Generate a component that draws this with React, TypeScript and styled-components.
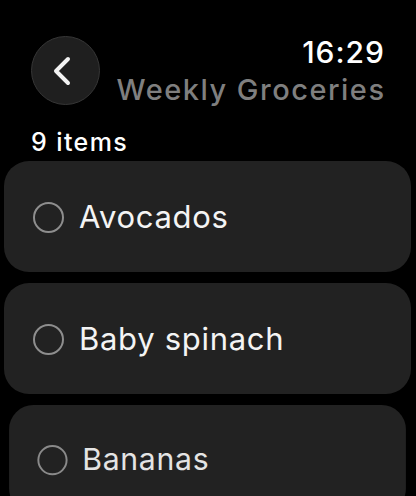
import React from "react";
import styled, { createGlobalStyle } from "styled-components";

const Global = createGlobalStyle`
  html, body { margin: 0; padding: 0; background: #000; }
  body { font-family: Inter, "Noto Sans", sans-serif; -webkit-font-smoothing: antialiased; }
`;

const Screen = styled.div`
  width: 416px;
  height: 496px;
  overflow: hidden;
  background: #000;
  display: flex;
  flex-direction: column;
`;

const Header = styled.header`
  display: flex;
  align-items: flex-start;
  justify-content: space-between;
  padding: 36px 32px 0 31px;
  height: 89px;
  box-sizing: border-box;
`;

const BackButton = styled.button`
  width: 69px;
  height: 69px;
  border-radius: 50%;
  background: #1f1f1f;
  border: 1.5px solid #363636;
  box-sizing: border-box;
  display: flex;
  align-items: center;
  justify-content: center;
  padding: 0 8px 0 0;
  cursor: pointer;
`;

const TitleBlock = styled.div`
  display: flex;
  flex-direction: column;
  align-items: flex-end;
`;

const Time = styled.div`
  color: #fff;
  font-size: 30px;
  font-weight: 500;
  line-height: 36px;
  margin-top: -2px;
  letter-spacing: 1px;
  margin-right: -1px;
`;

const Title = styled.div`
  color: #7f7f7f;
  font-size: 29px;
  font-weight: 500;
  line-height: 36px;
  margin-top: 2px;
  letter-spacing: 1.5px;
  margin-right: -1.5px;
`;

const Count = styled.div`
  color: #fff;
  font-size: 25px;
  font-weight: 500;
  line-height: 30px;
  padding: 0 0 0 31px;
  margin-top: 38px;
  letter-spacing: 1.4px;
`;

const List = styled.div`
  display: flex;
  flex-direction: column;
  gap: 11px;
  padding: 0 5px 0 4px;
  margin-top: 4px;
`;

const Card = styled.div<{ $scale?: number }>`
  background: #222222;
  border-radius: 25px;
  height: 111px;
  display: flex;
  align-items: center;
  gap: 15px;
  padding: 0 0 0 29px;
  box-sizing: border-box;
  flex-shrink: 0;
  transform: scale(${(p) => p.$scale ?? 1});
  transform-origin: top center;
`;

const Check = styled.span<{ $dim?: boolean }>`
  width: 31px;
  height: 31px;
  border-radius: 50%;
  border: 2.5px solid ${(p) => (p.$dim ? "#8a8a8a" : "#8e8e8e")};
  box-sizing: border-box;
  flex-shrink: 0;
  margin-top: 1px;
`;

const Label = styled.span<{ $dim?: boolean }>`
  color: ${(p) => (p.$dim ? "#e4e4e4" : "#f4f4f4")};
  font-size: 31px;
  font-weight: 400;
  letter-spacing: 0.7px;
`;

const items = [
  { name: "Avocados", scale: 1 },
  { name: "Baby spinach", scale: 1 },
  { name: "Bananas", scale: 0.975 },
];

export default function App() {
  return (
    <>
      <Global />
      <Screen>
        <Header>
          <BackButton aria-label="Back">
            <svg width="20" height="30" viewBox="0 0 20 30" fill="none">
              <path d="M16 3 L4 15 L16 27" stroke="#f2f2f2" strokeWidth="4" strokeLinecap="round" strokeLinejoin="round" />
            </svg>
          </BackButton>
          <TitleBlock>
            <Time>16:29</Time>
            <Title>Weekly Groceries</Title>
          </TitleBlock>
        </Header>
        <Count>9 items</Count>
        <List>
          {items.map((it) => (
            <Card key={it.name} $scale={it.scale}>
              <Check $dim={it.scale !== 1} />
              <Label $dim={it.scale !== 1}>{it.name}</Label>
            </Card>
          ))}
        </List>
      </Screen>
    </>
  );
}
